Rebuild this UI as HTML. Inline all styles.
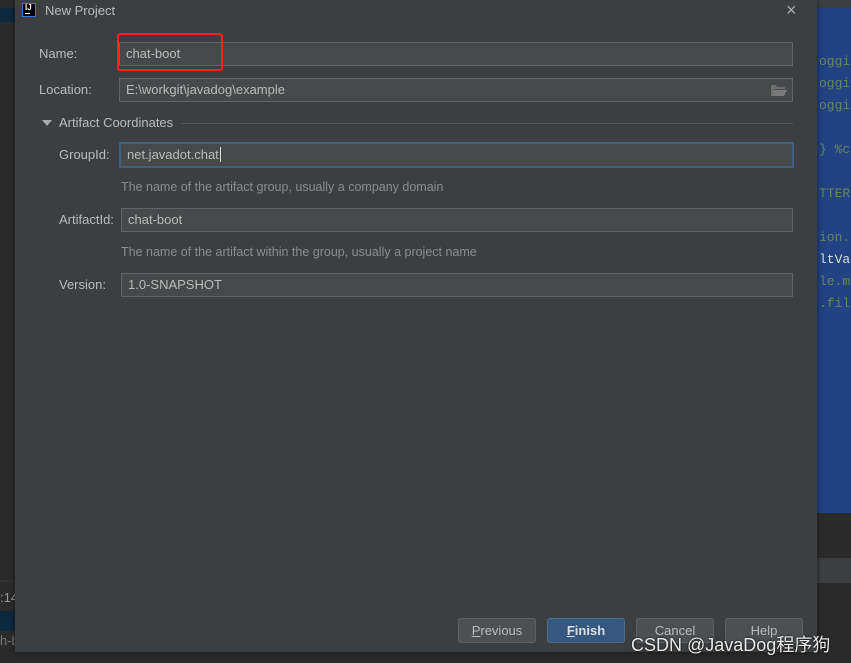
<!DOCTYPE html>
<html><head><meta charset="utf-8"><style>
*{margin:0;padding:0;box-sizing:border-box}
body{width:851px;height:663px;overflow:hidden;background:#2b2b2b;position:relative;font-family:"Liberation Sans","Noto Sans CJK SC",sans-serif;font-size:13px;color:#bbbbbb}
.abs{position:absolute}
.dlg{left:15px;top:0;width:802px;height:652px;background:#3c3f41;box-shadow:0 0 6px rgba(0,0,0,.5)}
.lbl{position:absolute;color:#bbbbbb;font-size:13px}
.inp{position:absolute;background:#45494a;border:1px solid #646464;height:24px;color:#bbbbbb;padding-left:6px;line-height:22px;font-size:13px}
.hint{position:absolute;color:#8c8c8c;font-size:12.5px}
.btn{position:absolute;top:618px;height:25px;width:78px;border:1px solid #5e6060;background:#4c5052;border-radius:3px;text-align:center;line-height:23px;color:#bbbbbb;font-size:13px}
.code{position:absolute;left:819px;font-family:"Liberation Mono",monospace;font-size:13px;color:#6a8759}
</style></head><body>
<div class="abs" style="left:0;top:8px;width:15px;height:14px;background:#0d293e"></div>
<div class="abs" style="left:0;top:580px;width:15px;height:2px;background:#323232"></div>
<div class="abs" style="left:0;top:590px;font-size:13px;color:#999">:14</div>
<div class="abs" style="left:0;top:611px;width:15px;height:20px;background:#0d293e"></div>
<div class="abs" style="left:0;top:633px;color:#777">h-b</div>
<div class="abs" style="left:817px;top:0;width:34px;height:8px;background:#3c3f41"></div>
<div class="abs" style="left:817px;top:8px;width:34px;height:505px;background:#214283"></div>
<div class="abs" style="left:817px;top:513px;width:34px;height:45px;background:#2b2b2b"></div>
<div class="abs" style="left:817px;top:558px;width:34px;height:25px;background:#3c3f41"></div>
<div class="code" style="top:54px">oggi</div>
<div class="code" style="top:76px">oggi</div>
<div class="code" style="top:98px">oggi</div>
<div class="code" style="top:142px">} %c</div>
<div class="code" style="top:186px">TTER</div>
<div class="code" style="top:230px">ion.</div>
<div class="code" style="top:252px;color:#ddd">ltVa</div>
<div class="code" style="top:274px">le.m</div>
<div class="code" style="top:296px">.fil</div>

<div class="abs dlg"></div>
<div class="abs" style="left:22px;top:3px;width:14px;height:14px;background:#000;border:1px solid #3a7bd5"></div>
<div class="abs" style="left:25px;top:3px;color:#fff;font-size:8px;font-weight:bold">IJ</div>
<div class="abs" style="left:25px;top:13px;width:5px;height:1px;background:#fff"></div>
<div class="abs" style="left:45px;top:3px;font-size:13px;color:#bbb">New Project</div>
<div class="abs" style="left:786px;top:0px;font-size:18px;color:#aaa">×</div>

<div class="lbl" style="left:39px;top:46px">Name:</div>
<div class="inp" style="left:119px;top:42px;width:674px">chat-boot</div>
<div class="abs" style="left:117px;top:33px;width:106px;height:38px;border:2px solid #ff2020;border-radius:3px"></div>
<div class="lbl" style="left:39px;top:82px">Location:</div>
<div class="inp" style="left:119px;top:78px;width:674px">E:\workgit\javadog\example</div>
<svg class="abs" style="left:771px;top:84px" width="16" height="12"><path d="M0 1h5l1 2h8v2H3L0 12z" fill="#6e6e6e"/><path d="M3 6h13l-3 6H0z" fill="#7a7a7a"/></svg>
<div class="abs" style="left:42px;top:120px;width:0;height:0;border-left:5px solid transparent;border-right:5px solid transparent;border-top:6px solid #aaa"></div>
<div class="lbl" style="left:59px;top:115px">Artifact Coordinates</div>
<div class="abs" style="left:181px;top:123px;width:612px;height:1px;background:#555"></div>
<div class="lbl" style="left:59px;top:147px">GroupId:</div>
<div class="inp" style="left:119px;top:142px;width:675px;height:26px;border:2px solid #3d6185;line-height:21px;padding-left:6px">net.javadot.chat<span style="border-left:1px solid #ddd;margin-left:1px"></span></div>
<div class="hint" style="left:121px;top:180px">The name of the artifact group, usually a company domain</div>
<div class="lbl" style="left:59px;top:212px">ArtifactId:</div>
<div class="inp" style="left:121px;top:208px;width:672px">chat-boot</div>
<div class="hint" style="left:121px;top:245px">The name of the artifact within the group, usually a project name</div>
<div class="lbl" style="left:59px;top:277px">Version:</div>
<div class="inp" style="left:121px;top:273px;width:672px">1.0-SNAPSHOT</div>

<div class="btn" style="left:458px"><u>P</u>revious</div>
<div class="btn" style="left:547px;background:#365880;border-color:#4c708c;color:#ddd;font-weight:bold"><u>F</u>inish</div>
<div class="btn" style="left:636px">Cancel</div>
<div class="btn" style="left:725px">Help</div>
<div class="abs" style="left:631px;top:631px;font-size:18px;color:#e8e8e8;text-shadow:0 0 2px #000">CSDN @JavaDog程序狗</div>
</body></html>
